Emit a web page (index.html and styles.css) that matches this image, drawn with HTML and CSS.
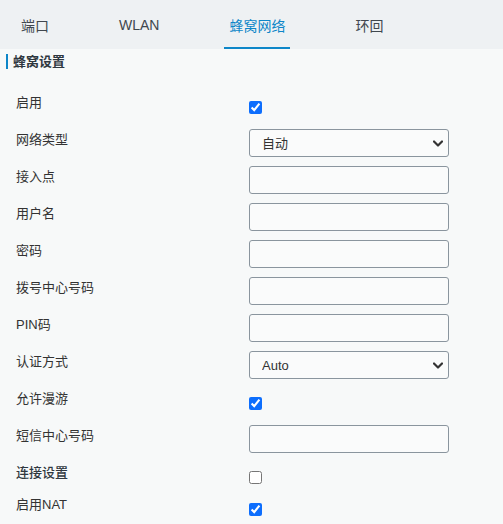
FILE: index.html
```html
<!DOCTYPE html>
<html lang="zh-CN">
<head>
<meta charset="utf-8">
<title>蜂窝网络</title>
<link rel="stylesheet" href="styles.css">
</head>
<body>
<nav class="tabs">
  <a class="tab">端口</a>
  <a class="tab">WLAN</a>
  <a class="tab active">蜂窝网络</a>
  <a class="tab">环回</a>
</nav>
<main class="content">
  <h2 class="section-title">蜂窝设置</h2>
  <form class="form">
    <div class="row row-check"><label class="lbl">启用</label><div class="ctl"><input type="checkbox" class="chk" checked></div></div>
    <div class="row"><label class="lbl">网络类型</label><div class="ctl"><select class="sel"><option>自动</option></select></div></div>
    <div class="row"><label class="lbl">接入点</label><div class="ctl"><input type="text" class="txt"></div></div>
    <div class="row"><label class="lbl">用户名</label><div class="ctl"><input type="text" class="txt"></div></div>
    <div class="row"><label class="lbl">密码</label><div class="ctl"><input type="password" class="txt"></div></div>
    <div class="row"><label class="lbl">拨号中心号码</label><div class="ctl"><input type="text" class="txt"></div></div>
    <div class="row"><label class="lbl">PIN码</label><div class="ctl"><input type="text" class="txt"></div></div>
    <div class="row"><label class="lbl">认证方式</label><div class="ctl"><select class="sel"><option>Auto</option></select></div></div>
    <div class="row row-check"><label class="lbl">允许漫游</label><div class="ctl"><input type="checkbox" class="chk" checked></div></div>
    <div class="row"><label class="lbl">短信中心号码</label><div class="ctl"><input type="text" class="txt"></div></div>
    <div class="row row-check row-short"><label class="lbl lbl-strong">连接设置</label><div class="ctl"><input type="checkbox" class="chk"></div></div>
    <div class="row row-check row-short"><label class="lbl">启用NAT</label><div class="ctl"><input type="checkbox" class="chk" checked></div></div>
  </form>
</main>
</body>
</html>
```
FILE: styles.css
```css
* { box-sizing: border-box; }
html, body { margin: 0; padding: 0; }
body {
  background: #f7f9f9;
  font-family: "Liberation Sans", "Noto Sans CJK SC", sans-serif;
  color: #333;
  font-size: 13px;
  overflow: hidden;
}
.tabs {
  display: flex;
  gap: 60px;
  height: 49px;
  padding-left: 16px;
  background: #eef1f3;
}
.tab {
  display: flex;
  align-items: center;
  padding: 3px 5px 0;
  font-family: "Liberation Sans", "Noto Sans CJK SC", sans-serif;
  font-size: 14px;
  color: #40474e;
  border-bottom: 2px solid transparent;
}
.tab.active {
  color: #0d86c8;
  border-bottom-color: #0d86c8;
}
.content { padding: 5px 0 0 6px; }
.section-title {
  margin: 0;
  height: 15px;
  line-height: 15px;
  font-size: 13px;
  font-weight: bold;
  color: #2f3840;
  border-left: 2px solid #0d86c8;
  padding-left: 5px;
}
.form {
  display: flex;
  flex-direction: column;
  gap: 9px;
  margin-top: 23px;
  padding-left: 10px;
}
.row {
  display: flex;
  align-items: flex-start;
  height: 28px;
}
.row-short { height: 23px; }
.lbl {
  width: 233px;
  padding-top: 1px;
  line-height: 20px;
  font-size: 13px;
  color: #333;
}
.lbl-strong { color: #2f3840; font-weight: 500; }
.ctl { width: 200px; }
.txt, .sel {
  display: block;
  width: 200px;
  height: 28px;
  margin: 0;
  border: 1px solid #8a959e;
  border-radius: 3px;
  background-color: #fafbfb;
  font-family: "Liberation Sans", "Noto Sans CJK SC", sans-serif;
  font-size: 13px;
  color: #333;
  padding: 0 12px;
  outline: none;
}
.sel {
  appearance: none;
  -webkit-appearance: none;
  background-image: url("data:image/svg+xml,%3Csvg xmlns='http://www.w3.org/2000/svg' width='10' height='7' viewBox='0 0 10 7'%3E%3Cpath d='M1 1.5l4 4 4-4' fill='none' stroke='%23333' stroke-width='2.2' stroke-linecap='round' stroke-linejoin='round'/%3E%3C/svg%3E");
  background-repeat: no-repeat;
  background-position: right 5px center;
  background-size: 10px 7px;
}
.chk {
  display: block;
  width: 13px;
  height: 13px;
  margin: 9px 0 0 0;
  accent-color: #0d6efd;
}
```
